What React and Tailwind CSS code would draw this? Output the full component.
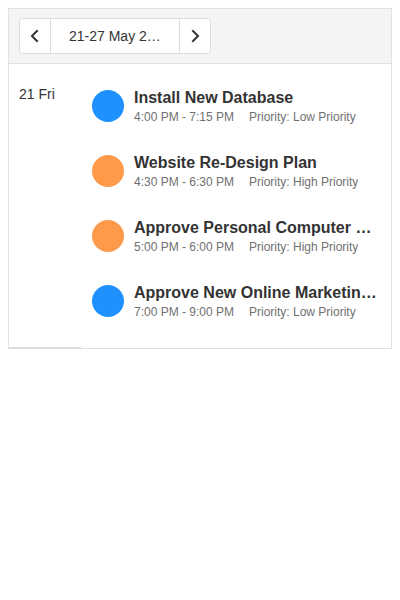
import React from "react";

const items = [
  { title: "Install New Database", time: "4:00 PM - 7:15 PM", pr: "Priority: Low Priority", color: "bg-[#1e90ff]" },
  { title: "Website Re-Design Plan", time: "4:30 PM - 6:30 PM", pr: "Priority: High Priority", color: "bg-[#ff9a4a]" },
  { title: "Approve Personal Computer Upgrade Plan", time: "5:00 PM - 6:00 PM", pr: "Priority: High Priority", color: "bg-[#ff9a4a]" },
  { title: "Approve New Online Marketing Strategy", time: "7:00 PM - 9:00 PM", pr: "Priority: Low Priority", color: "bg-[#1e90ff]" },
];

export default function App() {
  return (
    <div className="p-2 bg-white min-h-[600px]" style={{ fontFamily: '"Liberation Sans", Arial, sans-serif' }}>
      <div className="border border-[#e0e0e0] text-[#333]">
        <div className="h-[55px] bg-[#f4f4f4] border-b border-[#e0e0e0] flex items-center px-[10px]">
          <div className="flex h-[36px] border border-[#dcdcdc] rounded-[4px] bg-white">
            <button className="w-[31px] flex items-center justify-center border-r border-[#dcdcdc]">
              <svg width="14" height="14" viewBox="0 0 14 14" fill="none" stroke="#333" strokeWidth="2" strokeLinecap="square">
                <path d="M9 2 L4 7 L9 12" />
              </svg>
            </button>
            <div className="w-[128px] flex items-center justify-center text-[14px] px-[18px]">
              <span className="truncate">21-27 May 2024</span>
            </div>
            <button className="w-[31px] flex items-center justify-center border-l border-[#dcdcdc]">
              <svg width="14" height="14" viewBox="0 0 14 14" fill="none" stroke="#333" strokeWidth="2" strokeLinecap="square">
                <path d="M5 2 L10 7 L5 12" />
              </svg>
            </button>
          </div>
        </div>
        <div className="flex">
          <div className="w-[72px] shrink-0 border-b border-[#dadada] pl-[10px] pt-[22px] text-[14px] leading-[17px]">21 Fri</div>
          <div className="flex-1 min-w-0 pt-[9px] pb-[15px] pl-[11px] pr-[14px]">
            {items.map((it, i) => (
              <div key={i} className="h-[65px] flex items-center">
                <div className={`w-[32px] h-[32px] rounded-full shrink-0 ${it.color}`} />
                <div className="ml-[10px] min-w-0 flex-1 pt-[1px]">
                  <div className="text-[16px] leading-[20px] font-bold truncate">{it.title}</div>
                  <div className="text-[12px] leading-[16px] text-[#707070] mt-[1px] flex">
                    <span className="w-[115px] shrink-0">{it.time}</span>
                    <span className="truncate">{it.pr}</span>
                  </div>
                </div>
              </div>
            ))}
          </div>
        </div>
      </div>
    </div>
  );
}
